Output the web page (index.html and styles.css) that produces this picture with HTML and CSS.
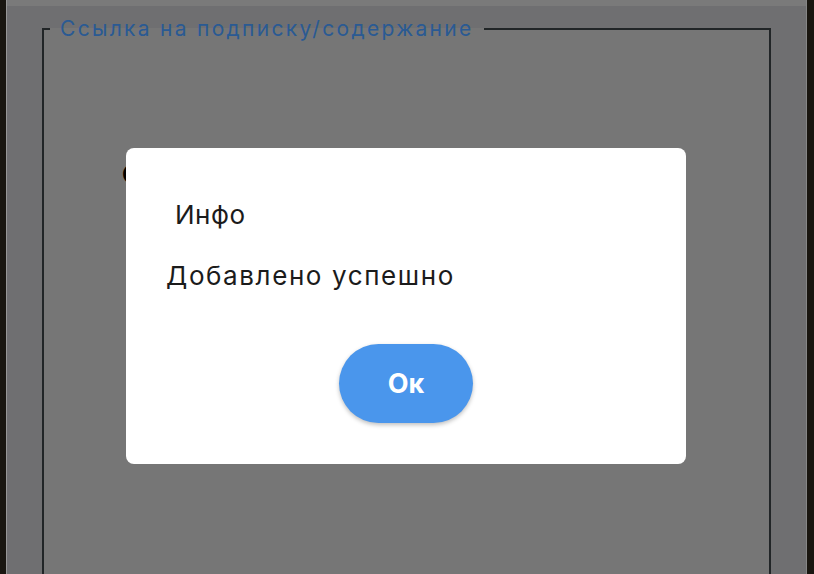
FILE: index.html
```html
<!DOCTYPE html>
<html lang="ru">
<head>
<meta charset="utf-8">
<title>Ссылка на подписку</title>
<link rel="stylesheet" href="styles.css">
</head>
<body>
<div class="window">
  <div class="topbar"></div>
  <div class="panel">
    <fieldset class="group">
      <legend class="group-title">Ссылка на подписку/содержание</legend>
      <div class="group-body">
        <div class="field-label">Ссылка</div>
      </div>
    </fieldset>
  </div>
</div>
<div class="overlay">
  <div class="dialog" role="dialog">
    <div class="dialog-title">Инфо</div>
    <div class="dialog-text">Добавлено успешно</div>
    <div class="dialog-actions">
      <button class="btn-ok" type="button">Ок</button>
    </div>
  </div>
</div>
</body>
</html>
```

FILE: styles.css
```css
html, body {
  margin: 0;
  padding: 0;
  height: 100%;
  overflow: hidden;
}
body {
  background: #2a251c;
  font-family: Inter, "Noto Sans", sans-serif;
}
.window {
  margin-left: 6px;
  width: 799px;
  height: 100%;
  border-left: 1px solid #fafafa;
  border-right: 1px solid #e0e0e0;
  background: #b9b9bc;
  display: flex;
  flex-direction: column;
  overflow: hidden;
}
.topbar {
  height: 6px;
  background: #cbcbcb;
  flex: none;
}
.panel {
  flex: 1;
  min-height: 0;
  overflow: hidden;
  padding: 11px 35px 0 35px;
}
.group {
  margin: 0;
  padding: 0;
  border: 2px solid #373e41;
  border-bottom: none;
  background: #c5c5c5;
  height: 100%;
  box-sizing: border-box;
}
.group-title {
  margin-left: 6px;
  padding: 0 10px;
  font-size: 21px;
  line-height: 24px;
  letter-spacing: 2.3px;
  color: #4696f5;
}
.group-body {
  padding: 119px 0 0 78px;
}
.field-label {
  font-size: 24px;
  font-weight: 700;
  line-height: 30px;
  color: #000;
}
.overlay {
  position: fixed;
  inset: 0;
  background: rgba(0, 0, 0, 0.4);
}
.dialog {
  position: absolute;
  left: 126px;
  top: 148px;
  width: 560px;
  height: 316px;
  box-sizing: border-box;
  background: #fff;
  border-radius: 8px;
  padding: 52px 40px 0 40px;
  display: flex;
  flex-direction: column;
}
.dialog-title {
  font-size: 26px;
  line-height: 30px;
  letter-spacing: 0.5px;
  color: #1b1b1b;
  padding-left: 9px;
}
.dialog-text {
  margin-top: 31px;
  font-size: 26px;
  line-height: 30px;
  letter-spacing: 1.6px;
  color: #1b1b1b;
}
.dialog-actions {
  margin-top: 53px;
  display: flex;
  justify-content: center;
}
.btn-ok {
  width: 134px;
  height: 79px;
  border: none;
  border-radius: 40px;
  background: #4a96ec;
  color: #fff;
  font-family: Inter, "Noto Sans", sans-serif;
  font-size: 27px;
  font-weight: 700;
  box-shadow: 0 2px 4px rgba(0, 0, 0, 0.25);
  padding: 0;
}
```
